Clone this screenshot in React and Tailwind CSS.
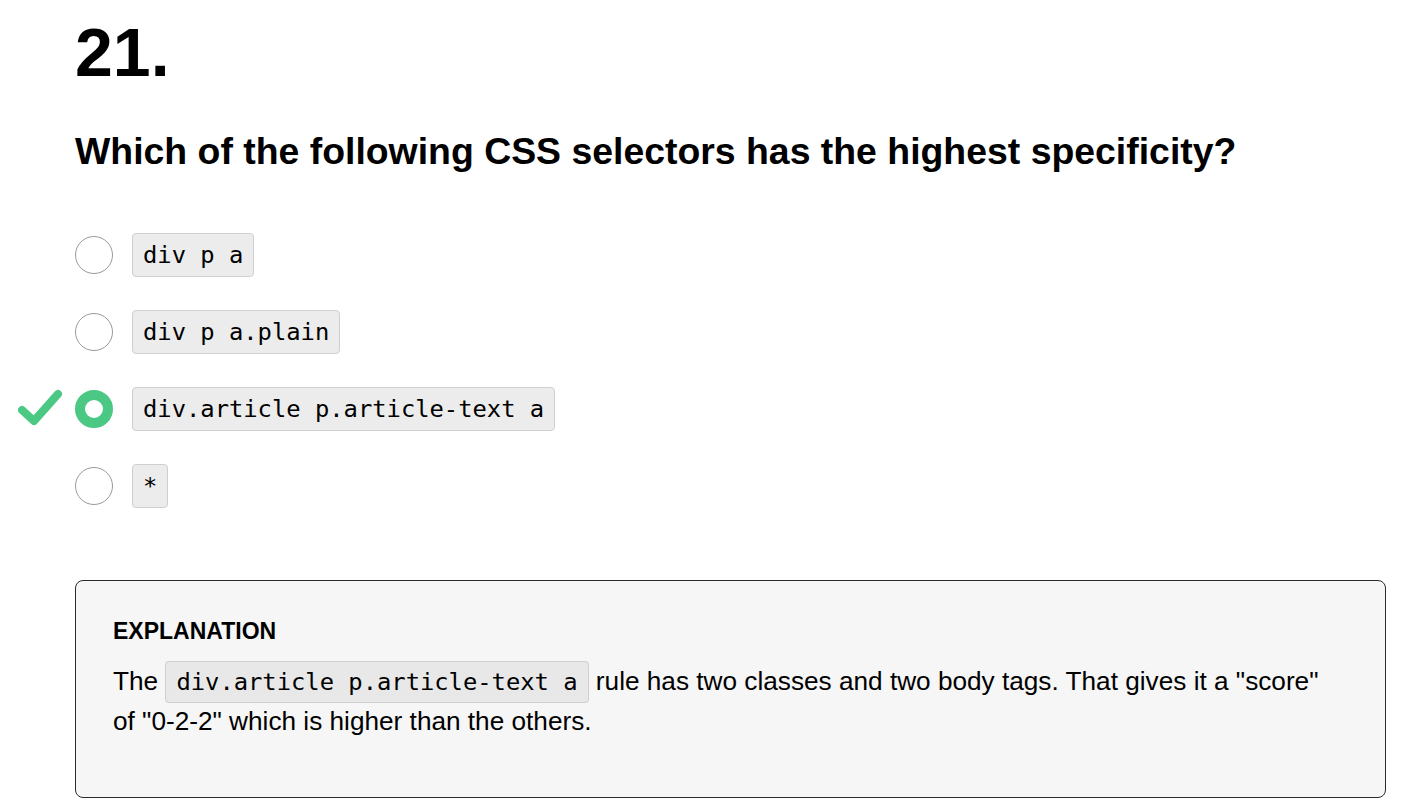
import { useState } from "react";

const options = [
  { id: 1, code: "div p a" },
  { id: 2, code: "div p a.plain" },
  { id: 3, code: "div.article p.article-text a", correct: true },
  { id: 4, code: "*" },
];

const mono = "font-['DejaVu_Sans_Mono','Liberation_Mono',monospace]";

const App = () => {
  const [selected, setSelected] = useState(3);

  return (
    <div className="min-h-screen bg-white font-['Liberation_Sans',Arial,sans-serif] text-black pl-[75px] pr-[15px]">
      {/* Question number */}
      <h1 className="text-[68px] leading-[76px] font-bold pt-[14px]">21.</h1>

      {/* Question */}
      <h2 className="mt-[40px] text-[37.4px] leading-[42px] font-bold">
        Which of the following CSS selectors has the highest specificity?
      </h2>

      {/* Options */}
      <ul className="mt-[61px] flex flex-col gap-[33px]">
        {options.map((opt) => (
          <li key={opt.id} className="relative flex flex-row items-center gap-[19px] h-[44px]">
            {opt.correct && (
              <svg
                className="absolute left-[-58px] top-[1px]"
                width="46"
                height="40"
                viewBox="0 0 46 40"
              >
                <path
                  d="M5 22 L17 33 L41 6"
                  fill="none"
                  stroke="#4cc885"
                  strokeWidth="8"
                  strokeLinecap="round"
                  strokeLinejoin="round"
                />
              </svg>
            )}
            <button
              onClick={() => setSelected(opt.id)}
              className={
                selected === opt.id
                  ? "w-[38px] h-[38px] rounded-full border-[10px] border-[#4cc885] bg-white"
                  : "w-[38px] h-[38px] rounded-full border border-[#9a9a9a] bg-white"
              }
            />
            <code className={`inline-block px-[10px] py-[6px] bg-[#ececec] border border-[#cfcfcf] rounded-[4px] text-[23.8px] leading-[30px] text-black ${mono}`}>
              {opt.code}
            </code>
          </li>
        ))}
      </ul>

      {/* Explanation */}
      <div className="mt-[72px] mb-[10px] bg-[#f6f6f6] border border-[#2b2b2b] rounded-[8px] px-[37px] pt-[37px] pb-[56px]">
        <h3 className="text-[23px] leading-[26px] font-bold">EXPLANATION</h3>
        <p className="mt-[18px] text-[26.2px] leading-[39px]">
          The{" "}
          <code className={`px-[10px] py-[6px] bg-[#e8e8e8] border border-[#cfcfcf] rounded-[4px] text-[23.8px] text-black ${mono}`}>
            div.article p.article-text a
          </code>{" "}
          rule has two classes and two body tags. That gives it a "score"
          <br />
          of "0-2-2" which is higher than the others.
        </p>
      </div>
    </div>
  );
};

export default App;
